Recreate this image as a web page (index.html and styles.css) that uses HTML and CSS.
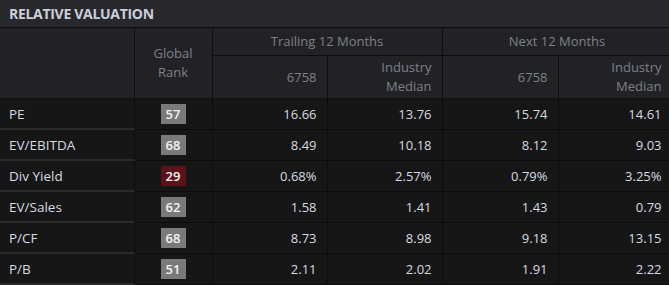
FILE: index.html
```html
<!DOCTYPE html>
<html lang="en">
<head>
  <meta charset="UTF-8" />
  <title>Relative Valuation</title>
  <link rel="stylesheet" href="styles.css">
</head>
<body>
  <div class="panel">
    <div class="panel-title">RELATIVE VALUATION</div>
    <table class="valuation">
      <colgroup>
        <col class="c-label"><col class="c-rank"><col class="c-a"><col class="c-b"><col class="c-c"><col class="c-d">
      </colgroup>
      <thead>
        <tr class="group-row">
          <th rowspan="2"></th>
          <th rowspan="2" class="center">Global<br>Rank</th>
          <th colspan="2" class="center">Trailing 12 Months</th>
          <th colspan="2" class="center">Next 12 Months</th>
        </tr>
        <tr class="sub-row">
          <th>6758</th>
          <th>Industry<br>Median</th>
          <th>6758</th>
          <th>Industry<br>Median</th>
        </tr>
      </thead>
      <tbody>
        <tr><td class="label">PE</td><td class="rank"><span class="badge">57</span></td><td>16.66</td><td>13.76</td><td>15.74</td><td>14.61</td></tr>
        <tr><td class="label">EV/EBITDA</td><td class="rank"><span class="badge">68</span></td><td>8.49</td><td>10.18</td><td>8.12</td><td>9.03</td></tr>
        <tr><td class="label">Div Yield</td><td class="rank"><span class="badge low">29</span></td><td>0.68%</td><td>2.57%</td><td>0.79%</td><td>3.25%</td></tr>
        <tr><td class="label">EV/Sales</td><td class="rank"><span class="badge">62</span></td><td>1.58</td><td>1.41</td><td>1.43</td><td>0.79</td></tr>
        <tr><td class="label">P/CF</td><td class="rank"><span class="badge">68</span></td><td>8.73</td><td>8.98</td><td>9.18</td><td>13.15</td></tr>
        <tr><td class="label">P/B</td><td class="rank"><span class="badge">51</span></td><td>2.11</td><td>2.02</td><td>1.91</td><td>2.22</td></tr>
      </tbody>
    </table>
  </div>
</body>
</html>
```

FILE: styles.css
```css
body {
  margin: 0;
  background: #161616;
  font-family: 'Open Sans', sans-serif;
  font-size: 13px;
  color: #d6dae2;
}

.panel {
  width: 669px;
  height: 285px;
  overflow: hidden;
  background: #161616;
}

.panel-title {
  height: 27px;
  line-height: 28px;
  padding-left: 9px;
  background: #28282c;
  border-bottom: 1px solid #0e0e10;
  font-weight: 700;
  font-size: 14px;
  color: #c9d0da;
  letter-spacing: -0.3px;
}

.valuation {
  border-collapse: collapse;
  table-layout: fixed;
  width: 672px;
}

.c-label { width: 134px; }
.c-rank { width: 78px; }
.c-a { width: 115px; }
.c-b { width: 115px; }
.c-c { width: 116px; }
.c-d { width: 114px; }

.valuation th {
  background: #222225;
  color: #7c818b;
  font-weight: 400;
  text-align: right;
  padding: 0 10px;
  border: 1px solid #0e0e10;
  border-top: none;
  line-height: 19px;
}

.valuation th:first-child {
  border-left: none;
}

.valuation th.center {
  text-align: center;
}

.group-row th {
  height: 27px;
}

.sub-row th {
  height: 42px;
}

.valuation td {
  height: 30px;
  padding: 0 10px;
  text-align: right;
  border-right: 1px solid #0c0c0c;
  border-bottom: 1px solid #0c0c0c;
}

.valuation td.label {
  text-align: left;
  padding-left: 9px;
  font-size: 13.5px;
  border-bottom-color: #2a2a2b;
  box-shadow: inset 0 -1px 0 #2a2a2b;
}

.valuation td.rank {
  text-align: center;
  padding: 0;
}

.badge {
  display: inline-block;
  width: 25px;
  height: 20px;
  line-height: 20px;
  background: #7a7a7a;
  color: #f2f2f2;
  font-weight: 600;
  text-align: center;
  vertical-align: middle;
}

.badge.low {
  background: #5c1218;
}
```
